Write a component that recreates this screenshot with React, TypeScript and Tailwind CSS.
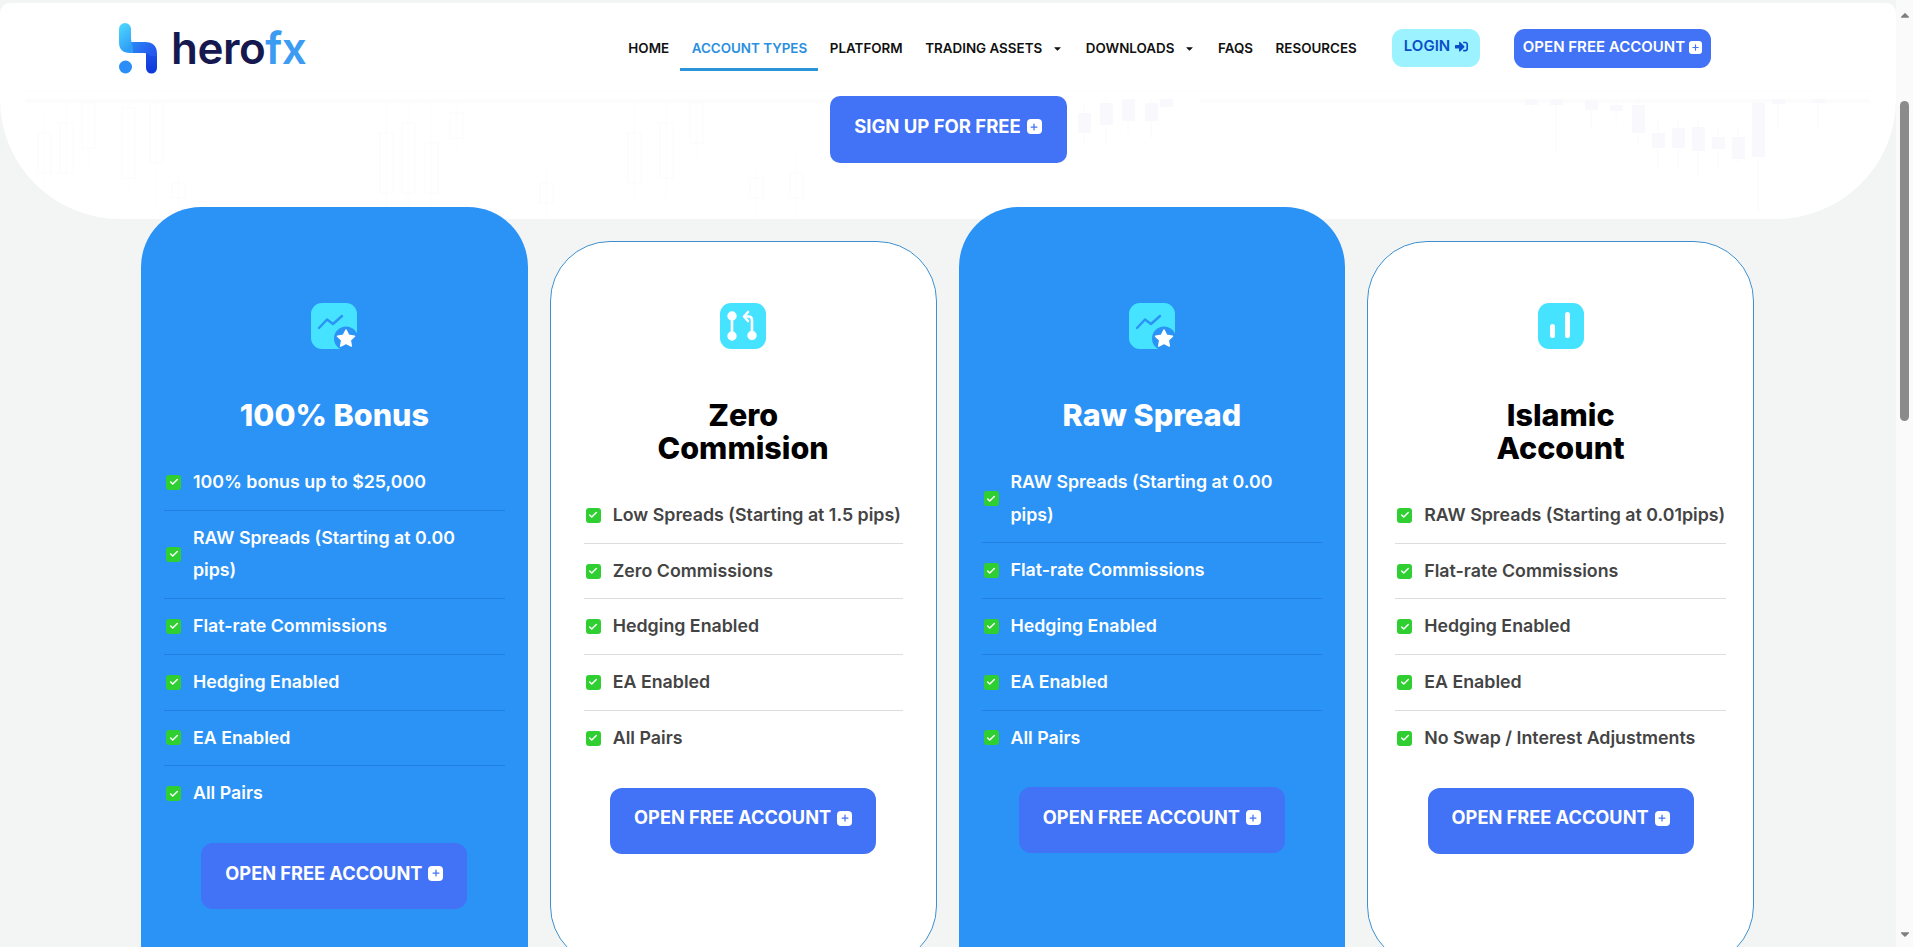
import { Check, Plus } from "lucide-react";
import { FaCaretDown, FaSignInAlt, FaCaretUp } from "react-icons/fa";

const navLinks = [
  { label: "HOME" },
  { label: "ACCOUNT TYPES", active: true },
  { label: "PLATFORM" },
  { label: "TRADING ASSETS", caret: true },
  { label: "DOWNLOADS", caret: true },
  { label: "FAQS" },
  { label: "RESOURCES" },
];

type Plan = {
  title: string[];
  featured: boolean;
  icon: "star" | "swap" | "bars";
  cardClass: string;
  items: string[];
};

const featuredCard =
  "rounded-[60px] bg-[#2b93f6] px-[23px] pt-[95px] pb-[111px] text-white";

const plans: Plan[] = [
  {
    title: ["100% Bonus"],
    featured: true,
    icon: "star",
    cardClass: featuredCard,
    items: [
      "100% bonus up to $25,000",
      "RAW Spreads (Starting at 0.00 pips)",
      "Flat-rate Commissions",
      "Hedging Enabled",
      "EA Enabled",
      "All Pairs",
    ],
  },
  {
    title: ["Zero", "Commision"],
    featured: false,
    icon: "swap",
    cardClass:
      "mt-[34px] self-start rounded-[60px] border border-[#3e90cf] bg-white px-[33px] pt-[60px] pb-[111px] text-[#444444]",
    items: [
      "Low Spreads (Starting at 1.5 pips)",
      "Zero Commissions",
      "Hedging Enabled",
      "EA Enabled",
      "All Pairs",
    ],
  },
  {
    title: ["Raw Spread"],
    featured: true,
    icon: "star",
    cardClass: featuredCard,
    items: [
      "RAW Spreads (Starting at 0.00 pips)",
      "Flat-rate Commissions",
      "Hedging Enabled",
      "EA Enabled",
      "All Pairs",
    ],
  },
  {
    title: ["Islamic", "Account"],
    featured: false,
    icon: "bars",
    cardClass:
      "mt-[34px] self-start rounded-[60px] border border-[#3e90cf] bg-white px-[27px] pt-[60px] pb-[111px] text-[#444444]",
    items: [
      "RAW Spreads (Starting at 0.01pips)",
      "Flat-rate Commissions",
      "Hedging Enabled",
      "EA Enabled",
      "No Swap / Interest Adjustments",
    ],
  },
];

// x, body top, body height, wick top, wick bottom
const candles = [
  [38, 130, 40, 110, 185], [60, 120, 50, 100, 175], [82, 100, 45, 95, 165], [122, 105, 70, 96, 190], [150, 100, 60, 95, 200],
  [172, 180, 15, 170, 205], [380, 130, 60, 100, 215], [402, 120, 70, 96, 205], [425, 140, 50, 100, 210], [450, 110, 25, 96, 150],
  [540, 180, 20, 160, 215], [628, 130, 50, 100, 200], [660, 120, 55, 96, 195], [690, 100, 40, 96, 160], [750, 175, 20, 165, 215],
  [790, 170, 25, 150, 215],
];

const brightCandles = [
  [1078, 110, 20, 100, 140], [1100, 100, 22, 96, 140], [1122, 96, 22, 96, 130], [1145, 100, 18, 96, 135],
  [1160, 96, 8, 95, 105], [1525, 96, 6, 95, 105], [1550, 96, 6, 95, 150], [1585, 97, 10, 95, 125], [1610, 102, 6, 95, 120],
  [1632, 102, 28, 95, 140], [1652, 130, 15, 115, 165], [1672, 125, 20, 115, 165], [1692, 124, 24, 115, 175], [1712, 134, 12, 125, 165],
  [1732, 134, 22, 125, 160], [1752, 100, 54, 97, 210], [1772, 96, 5, 95, 125], [1812, 96, 4, 95, 125],
];

function Candlesticks() {
  return (
    <svg className="absolute inset-0 h-full w-full" aria-hidden="true">
      <rect x="25" y="96" width="800" height="4" fill="#fcfcfd" />
      <rect x="1200" y="96" width="670" height="4" fill="#fcfcfd" />
      {candles.map(([x, top, height, wickTop, wickBottom]) => (
        <g key={x}>
          <line x1={x + 6} x2={x + 6} y1={wickTop} y2={wickBottom} stroke="#fcfcfd" />
          <rect x={x} y={top} width="13" height={height} fill="none" stroke="#fbfbfc" />
        </g>
      ))}
      {brightCandles.map(([x, top, height, wickTop, wickBottom]) => (
        <g key={x}>
          <line x1={x + 6} x2={x + 6} y1={wickTop} y2={wickBottom} stroke="#fafafd" />
          <rect x={x} y={top} width="13" height={height} fill="#f8f8fd" />
        </g>
      ))}
    </svg>
  );
}

function Logo() {
  return (
    <div className="flex items-center gap-[13px]">
      <svg width="39" height="51" viewBox="0 0 39 51" aria-hidden="true">
        <defs>
          <linearGradient id="stem" x1="0" y1="0" x2="0.4" y2="1">
            <stop offset="0" stopColor="#4fdcfd" />
            <stop offset="1" stopColor="#2f9df8" />
          </linearGradient>
          <linearGradient id="band" x1="0" y1="0" x2="1" y2="0.4">
            <stop offset="0" stopColor="#2d8df7" />
            <stop offset="1" stopColor="#2458ee" />
          </linearGradient>
          <linearGradient id="leg" x1="0" y1="0" x2="0" y2="1">
            <stop offset="0" stopColor="#1e4fe8" />
            <stop offset="1" stopColor="#0b37d8" />
          </linearGradient>
        </defs>
        <path d="M27 30H38V45a5.500 5.500 0 0 1-11 0z" fill="url(#leg)" />
        <path d="M10 19H26Q38 19 38 31V33H31Q29 30 25 30H10z" fill="url(#band)" />
        <path d="M6 0a6 6 0 0 0-6 6V19Q0 30 11 30H14V25Q12 19 12 15V6a6 6 0 0 0-6-6z" fill="url(#stem)" />
        <circle cx="6.500" cy="44" r="6.500" fill="#2b8ef6" />
      </svg>
      <span className="pb-[2px] text-[44px] leading-none font-semibold tracking-[-0.5px] text-[#15194f]">
        hero<span className="text-[#3c9cf2]">fx</span>
      </span>
    </div>
  );
}

function PlusBadge() {
  return (
    <span className="flex h-[15px] w-[15px] items-center justify-center rounded-[4px] bg-white text-[#4272f5]">
      <Plus size={10} strokeWidth={3} />
    </span>
  );
}

function PlanIcon({ icon, featured }: { icon: Plan["icon"]; featured: boolean }) {
  return (
    <svg width="48" height="48" viewBox="0 0 48 48" aria-hidden="true">
      <rect x="1" y="1" width="46" height="46" rx="11" fill="#45e3ff" />
      {icon === "star" && (
        <>
          <path d="M9 26l8-8.500 6 4.500 9-8" fill="none" stroke="#2b93f6" strokeWidth="2.400" strokeLinecap="round" strokeLinejoin="round" />
          <circle cx="36" cy="36.500" r="12" fill={featured ? "#2b93f6" : "#ffffff"} />
          <path d="M36 28l2.700 5.300 5.800.900-4.200 4.100 1 5.800-5.300-2.700-5.300 2.700 1-5.800-4.200-4.100 5.800-.900z" fill="#ffffff" stroke="#ffffff" strokeWidth="1.500" strokeLinejoin="round" />
        </>
      )}
      {icon === "swap" && (
        <g stroke="#ffffff" strokeWidth="2.600" fill="none" strokeLinecap="round" strokeLinejoin="round">
          <circle cx="13" cy="14" r="3.400" fill="#ffffff" />
          <circle cx="13" cy="34" r="3.400" fill="#ffffff" />
          <line x1="13" y1="14" x2="13" y2="34" />
          <circle cx="33" cy="33.500" r="3.400" fill="#ffffff" />
          <path d="M33 33.500V18q0-3.500-3.500-3.500H26" />
          <path d="M29 10l-4 4.500 4 4.500" />
        </g>
      )}
      {icon === "bars" && (
        <>
          <rect x="13" y="22" width="5" height="14" rx="2.500" fill="#ffffff" />
          <rect x="28" y="10" width="5" height="26" rx="2.500" fill="#ffffff" />
        </>
      )}
    </svg>
  );
}

function PlanCard({ plan }: { plan: Plan }) {
  const { featured } = plan;
  return (
    <div className={plan.cardClass}>
      <div className="flex justify-center">
        <PlanIcon icon={plan.icon} featured={featured} />
      </div>
      <h3
        className={
          featured
            ? "mt-[48px] mb-[24px] text-center text-[30.5px] leading-[33px] font-extrabold text-white"
            : "mt-[48px] mb-[24px] text-center text-[30.5px] leading-[33px] font-extrabold text-black"
        }
      >
        {plan.title.map((line) => (
          <div key={line}>{line}</div>
        ))}
      </h3>
      <ul>
        {plan.items.map((item, i) => (
          <li
            key={item}
            className={
              i === plan.items.length - 1
                ? "flex items-center gap-[12px] py-[11px] pl-[2px]"
                : featured
                  ? "flex items-center gap-[12px] border-b border-[#1f80e0] py-[11px] pr-[8px] pl-[2px]"
                  : "flex items-center gap-[12px] border-b border-[#dddddd] py-[11px] pl-[2px]"
            }
          >
            <span className="flex h-[15px] w-[15px] shrink-0 items-center justify-center rounded-[3px] bg-[#2fcf32] text-white">
              <Check size={10} strokeWidth={3.5} />
            </span>
            <span className="text-[17.8px] leading-[32.7px] font-semibold">{item}</span>
          </li>
        ))}
      </ul>
      <a className="mx-auto mt-[22px] flex h-[66px] w-[266px] items-center justify-center gap-[6px] rounded-[12px] bg-[#4272f5] pb-[5px] text-[18.2px] font-bold whitespace-nowrap text-white">
        OPEN FREE ACCOUNT
        <PlusBadge />
      </a>
    </div>
  );
}

function FakeScrollbar() {
  return (
    <div className="flex w-[17px] shrink-0 flex-col items-center bg-[#fafafa] text-[#7f7f7f]">
      <FaCaretUp size={14} className="mt-[8px]" />
      <div className="mt-[79px] h-[320px] w-[9px] rounded-[5px] bg-[#8b8b8b]" />
      <FaCaretDown size={14} className="mt-auto mb-[6px]" />
    </div>
  );
}

export default function App() {
  return (
    <div className="flex h-[947px] overflow-hidden bg-[#f3f5f5] font-['Inter',sans-serif]">
      <main className="min-w-0 flex-1">
        <section className="relative mt-[3px] h-[216px] rounded-t-[10px] rounded-b-[120px] bg-white">
          <Candlesticks />
          <header className="relative mx-[18px] flex h-[87px] items-start justify-between rounded-[8px] bg-white pt-[20px] pr-[167px] pl-[101px] shadow-[0_1px_2px_rgba(0,0,0,0.015)]">
            <Logo />
            <div className="flex items-start pt-[6px]">
              <nav className="flex">
                {navLinks.map((link) => (
                  <a
                    key={link.label}
                    className={
                      link.active
                        ? "flex h-[42px] items-center border-b-[3px] border-[#2b93d8] px-[11.3px] pb-[1px] text-[13.4px] font-semibold text-[#2b8fe0]"
                        : "flex h-[42px] items-center px-[11.3px] pb-[4px] text-[13.4px] font-semibold text-[#111111]"
                    }
                  >
                    {link.label}
                    {link.caret && <FaCaretDown size={11} className="ml-[10px]" />}
                  </a>
                ))}
              </nav>
              <a className="ml-[24px] flex h-[38px] w-[88px] items-center justify-center gap-[5px] rounded-[11px] bg-[#9cf3ff] pb-[3px] text-[15px] font-semibold text-[#0a4fc9]">
                LOGIN
                <FaSignInAlt size={13} />
              </a>
              <a className="ml-[34px] flex h-[39px] w-[197px] items-center justify-center gap-[4px] rounded-[11px] bg-[#4272f5] pb-[3px] text-[15px] font-semibold whitespace-nowrap text-white">
                OPEN FREE ACCOUNT
                <span className="flex h-[13px] w-[13px] items-center justify-center rounded-[3px] bg-white text-[#4272f5]">
                  <Plus size={9} strokeWidth={3} />
                </span>
              </a>
            </div>
          </header>
          <a className="relative mx-auto mt-[6px] flex h-[67px] w-[237px] items-center justify-center gap-[6px] rounded-[10px] bg-[#4272f5] pb-[6px] text-[18.5px] font-bold whitespace-nowrap text-white">
            SIGN UP FOR FREE
            <PlusBadge />
          </a>
        </section>
        <section className="relative -mt-[12px] grid grid-cols-4 gap-[22px] pr-[142px] pl-[141px]">
          {plans.map((plan) => (
            <PlanCard key={plan.title.join(" ")} plan={plan} />
          ))}
        </section>
      </main>
      <FakeScrollbar />
    </div>
  );
}
